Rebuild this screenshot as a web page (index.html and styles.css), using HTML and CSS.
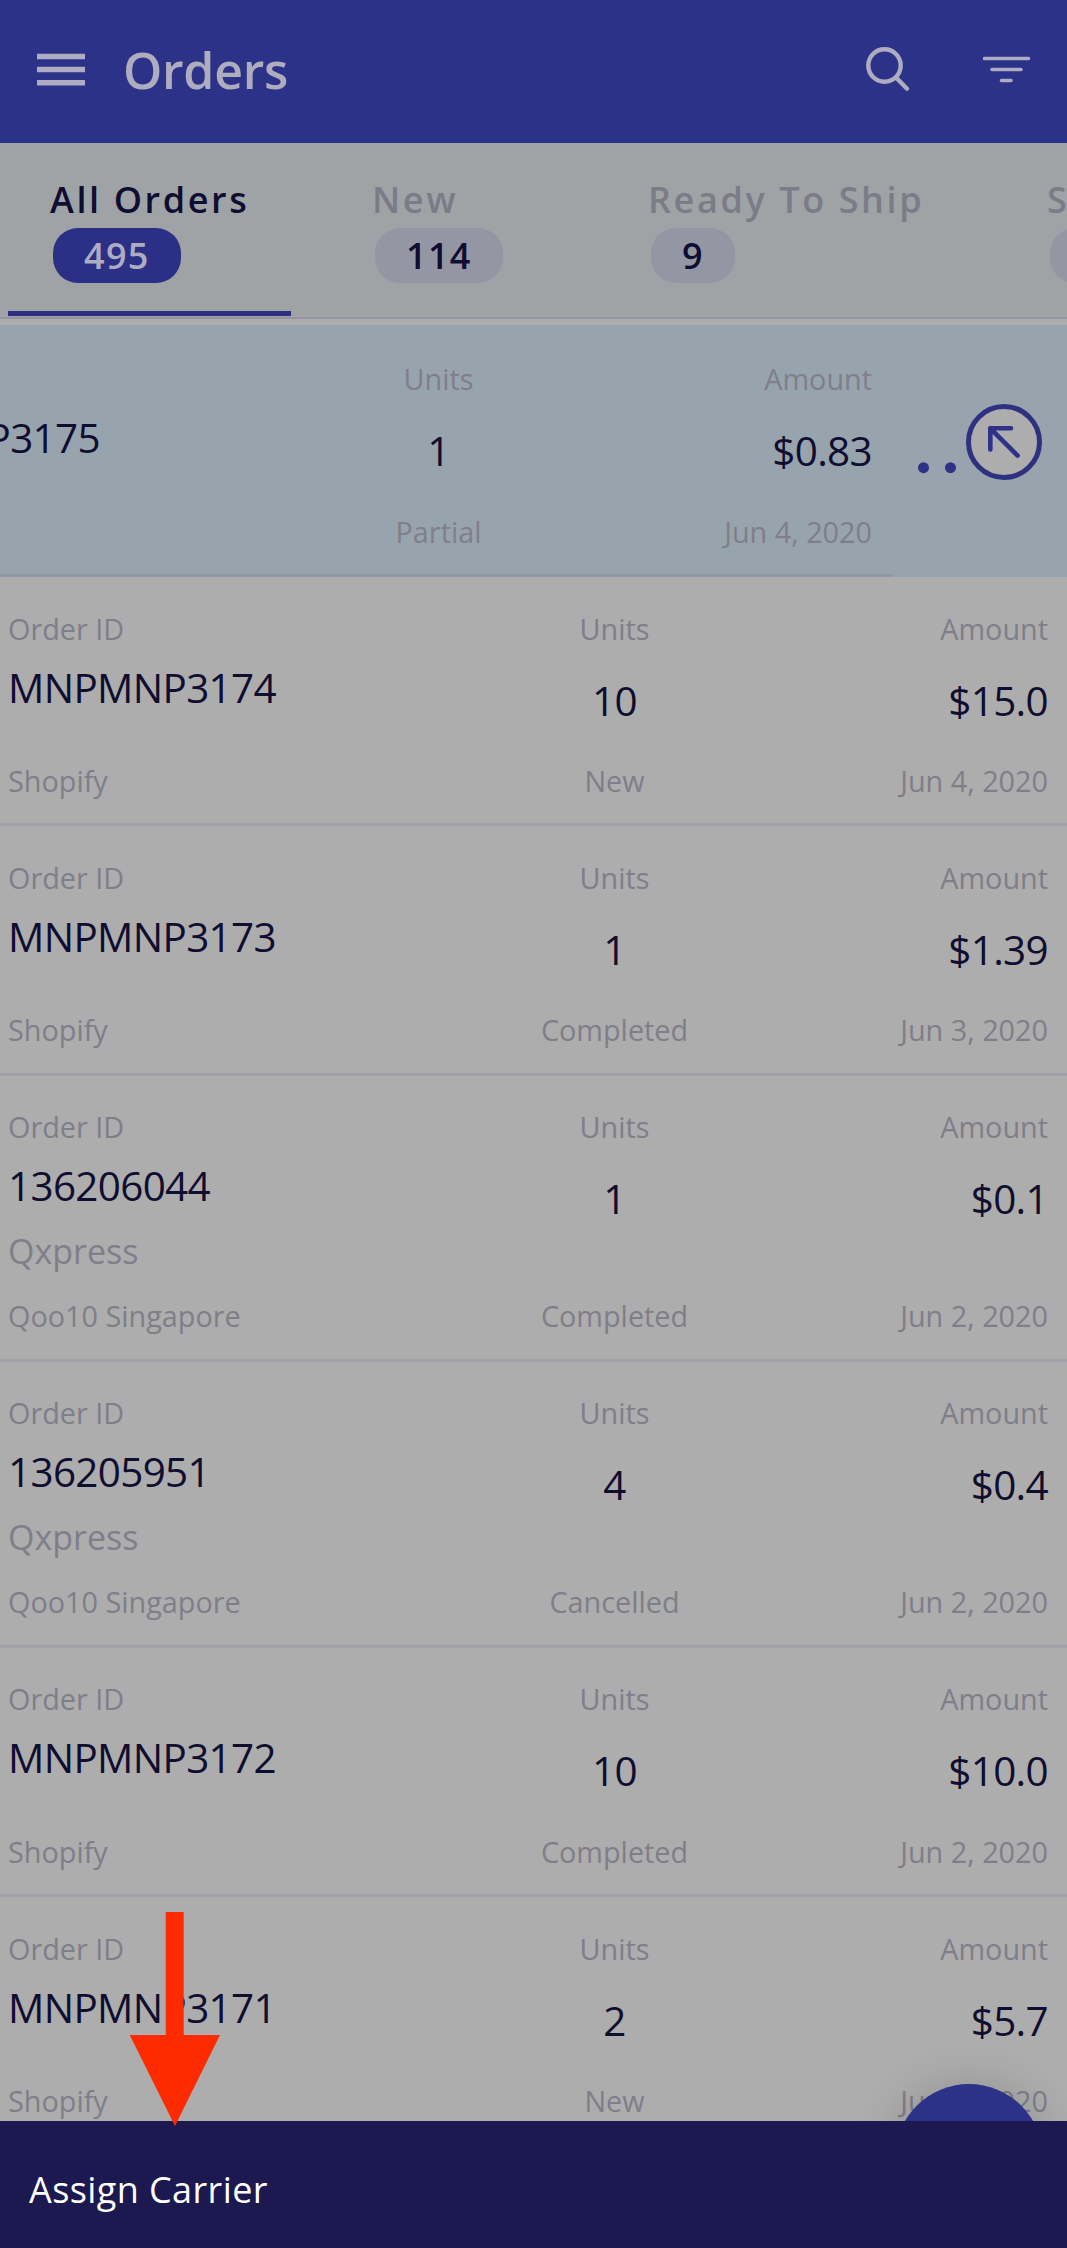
FILE: index.html
```html
<!DOCTYPE html>
<html lang="en">
<head>
<meta charset="utf-8">
<title>Orders</title>
<link rel="stylesheet" href="styles.css">
</head>
<body>
<div class="screen">
  <header class="app-bar">
    <svg class="icon-menu" width="48" height="34" viewBox="0 0 48 34"><path d="M0 3.500h48M0 16.500h48M0 29.700h48"/></svg>
    <h1 class="app-title">Orders</h1>
    <svg class="icon-search" width="46" height="46" viewBox="0 0 46 46"><circle cx="18.5" cy="18.5" r="16.2"/><path d="M30.500 31L41 41.700"/></svg>
    <svg class="icon-filter" width="48" height="28" viewBox="0 0 48 28"><path d="M1.500 2.500h44M9 13.500h29M18.500 24.500h9.500"/></svg>
  </header>

  <nav class="tabs">
    <div class="tab active"><span class="tab-name">All Orders</span><span class="pill">495</span></div>
    <div class="tab"><span class="tab-name">New</span><span class="pill">114</span></div>
    <div class="tab"><span class="tab-name">Ready To Ship</span><span class="pill">9</span></div>
    <div class="tab"><span class="tab-name">S</span><span class="pill"></span></div>
  </nav>

  <main class="orders">
    <section class="order swiped">
      <div class="order-body">
        <div class="col"><span class="label"></span><span class="value id">MNPMNP3175</span></div>
        <div class="col mid"><span class="label">Units</span><span class="value num">1</span><span class="label foot">Partial</span></div>
        <div class="col end"><span class="label">Amount</span><span class="value num">$0.83</span><span class="label foot">Jun 4, 2020</span></div>
      </div>
      <div class="swipe-action">
        <svg width="140" height="80" viewBox="0 0 140 80">
          <circle class="dot" cx="13.500" cy="65.700" r="5.500"/><circle class="dot" cx="40.500" cy="65.700" r="5.500"/>
          <circle class="ring" cx="94" cy="40" r="35.500"/>
          <path class="stroke" d="M101 26.300H80.300V47.500M80.300 26.300L107.600 53.600"/>
        </svg>
      </div>
    </section>
    <section class="order">
      <div class="col"><span class="label">Order ID</span><span class="value">MNPMNP3174</span><span class="label foot">Shopify</span></div>
      <div class="col mid"><span class="label">Units</span><span class="value num">10</span><span class="label foot">New</span></div>
      <div class="col end"><span class="label">Amount</span><span class="value num">$15.0</span><span class="label foot">Jun 4, 2020</span></div>
    </section>
    <section class="order">
      <div class="col"><span class="label">Order ID</span><span class="value">MNPMNP3173</span><span class="label foot">Shopify</span></div>
      <div class="col mid"><span class="label">Units</span><span class="value num">1</span><span class="label foot">Completed</span></div>
      <div class="col end"><span class="label">Amount</span><span class="value num">$1.39</span><span class="label foot">Jun 3, 2020</span></div>
    </section>
    <section class="order tall">
      <div class="col"><span class="label">Order ID</span><span class="value">136206044</span><span class="carrier">Qxpress</span><span class="label foot">Qoo10 Singapore</span></div>
      <div class="col mid"><span class="label">Units</span><span class="value num">1</span><span class="label foot">Completed</span></div>
      <div class="col end"><span class="label">Amount</span><span class="value num">$0.1</span><span class="label foot">Jun 2, 2020</span></div>
    </section>
    <section class="order tall">
      <div class="col"><span class="label">Order ID</span><span class="value">136205951</span><span class="carrier">Qxpress</span><span class="label foot">Qoo10 Singapore</span></div>
      <div class="col mid"><span class="label">Units</span><span class="value num">4</span><span class="label foot">Cancelled</span></div>
      <div class="col end"><span class="label">Amount</span><span class="value num">$0.4</span><span class="label foot">Jun 2, 2020</span></div>
    </section>
    <section class="order">
      <div class="col"><span class="label">Order ID</span><span class="value">MNPMNP3172</span><span class="label foot">Shopify</span></div>
      <div class="col mid"><span class="label">Units</span><span class="value num">10</span><span class="label foot">Completed</span></div>
      <div class="col end"><span class="label">Amount</span><span class="value num">$10.0</span><span class="label foot">Jun 2, 2020</span></div>
    </section>
    <section class="order">
      <div class="col"><span class="label">Order ID</span><span class="value">MNPMNP3171</span><span class="label foot">Shopify</span></div>
      <div class="col mid"><span class="label">Units</span><span class="value num">2</span><span class="label foot">New</span></div>
      <div class="col end"><span class="label">Amount</span><span class="value num">$5.7</span><span class="label foot">Jun 2, 2020</span></div>
    </section>
    <div class="fab"></div>
  </main>

  <footer class="sheet">Assign Carrier</footer>
  <svg class="pointer" width="92" height="216" viewBox="0 0 92 216"><path d="M36.700 1h18v123H91L46 215L.700 124h36z"/></svg>
</div>
</body>
</html>
```
FILE: styles.css
```css
* { box-sizing: border-box; }

body {
  margin: 0;
  background: #adadad;
  font-family: "Open Sans", "Noto Sans", sans-serif;
}

.screen {
  position: relative;
  display: flex;
  flex-direction: column;
  width: 1067px;
  height: 2248px;
  overflow: hidden;
}

/* App bar */
.app-bar {
  display: flex;
  flex: none;
  align-items: flex-start;
  height: 143px;
  padding: 0 36px 0 37px;
  background: #2c3287;
  color: #aeacbf;
}
.app-bar svg {
  fill: none;
  stroke: #aeacc2;
}
.icon-menu { margin-top: 53px; stroke-width: 5.5; }
.app-title {
  margin: 36px 0 0 38px;
  font-size: 50px;
  line-height: 68px;
  font-weight: 600;
  letter-spacing: -0.3px;
}
.icon-search {
  margin: 47px 0 0 auto;
  stroke-width: 4.4;
  stroke-linecap: round;
}
.icon-filter {
  margin: 56px 0 0 71px;
  stroke-width: 3.6;
  stroke-linecap: round;
}

/* Status tabs */
.tabs {
  display: grid;
  flex: none;
  grid-template-columns: 322px 276px 399px 300px;
  height: 176px;
  padding-left: 8px;
  border-bottom: 2px solid #9594a3;
  background: #9fa3a6;
}
.tab {
  display: flex;
  flex-direction: column;
  align-items: flex-start;
  height: 173px;
  padding: 33px 0 0 42px;
  color: #7c7b88;
  font-size: 36px;
  font-weight: 600;
  letter-spacing: 2.6px;
  white-space: nowrap;
}
.tab.active {
  width: 283px;
  border-bottom: 5px solid #2d2f84;
  color: #0f0d31;
}
.tab-name { line-height: 48px; }
.pill {
  height: 55px;
  margin: 4px 0 0 3px;
  padding: 0 31px;
  border-radius: 25px;
  background: #9596a4;
  color: #0f0d31;
  line-height: 56px;
  letter-spacing: 1.3px;
}
.active .pill { background: #2c2f86; color: #aeacc2; }

/* Order list */
.orders {
  position: relative;
  flex: 1;
  min-height: 0;
  padding-top: 6px;
  overflow: hidden;
}
.order,
.order-body {
  display: grid;
  grid-template-columns: 407.5px 398px 234.5px;
  height: 249.3px;
  padding: 31.5px 0 22.5px 8px;
  border-bottom: 3px solid #a2a1aa;
}
.order.tall { height: 286.2px; }
.order.swiped {
  display: flex;
  justify-content: flex-end;
  height: 252px;
  padding: 0;
  border: 0;
  background: #98a4ad;
}
.order-body {
  flex: none;
  height: 252px;
  padding-top: 34px;
  padding-right: 21px;
  border-color: #9199a6;
}
.swipe-action { flex: none; width: 174px; padding: 77px 0 0 17px; }
.swipe-action svg { display: block; }
.dot { fill: #2d3187; }
.ring { fill: #adadad; stroke: #2d3180; stroke-width: 5; }
.stroke {
  fill: none;
  stroke: #2d3187;
  stroke-width: 4.6;
  stroke-linecap: round;
  stroke-linejoin: round;
}
.col {
  display: flex;
  flex-direction: column;
  color: #7f7e89;
  white-space: nowrap;
}
.mid { align-items: center; }
.end { align-items: flex-end; }
.label { min-height: 40px; font-size: 28.8px; line-height: 40px; }
.value {
  margin-top: 11px;
  color: #100e30;
  font-size: 40.4px;
  line-height: 56px;
  letter-spacing: -0.65px;
}
.value.num { margin-top: 24px; }
.carrier { margin-top: 14px; font-size: 34px; line-height: 46px; }
.foot { margin-top: auto; }

.fab {
  position: absolute;
  top: 1765px;
  left: 895px;
  width: 148px;
  height: 148px;
  border-radius: 50%;
  background: #2c3287;
  box-shadow: 0 6px 50px rgba(0, 0, 0, 0.2);
}

/* Bottom sheet */
.sheet {
  flex: none;
  height: 127px;
  padding: 44px 0 0 29px;
  background: #1c1951;
  color: #fff;
  font-size: 36px;
  line-height: 50px;
  letter-spacing: 0.4px;
}
.pointer {
  position: absolute;
  top: 1911px;
  left: 128.5px;
  fill: #ff2b00;
}
```
